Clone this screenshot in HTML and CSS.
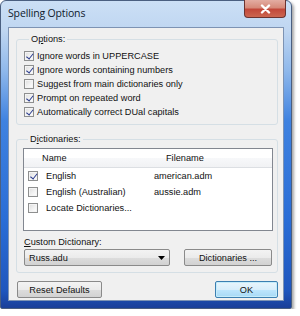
FILE: index.html
```html
<!DOCTYPE html>
<html lang="en">
<head>
<meta charset="UTF-8">
<title>Spelling Options</title>
<link rel="stylesheet" href="styles.css">
</head>
<body>

<div class="window">
    <div class="titlebar">
        <span class="title">Spelling Options</span>
        <span class="close-btn">
            <svg width="11" height="10" viewBox="0 0 11 10"><path d="M2 1.5 L9 8.5 M9 1.5 L2 8.5" stroke="#fff" stroke-width="2.4" stroke-linecap="round"/></svg>
        </span>
    </div>

    <div class="client">
        <fieldset class="group options">
            <legend>O<u>p</u>tions:</legend>
            <div class="check-row"><span class="check on"></span>Ignore words in UPPERCASE</div>
            <div class="check-row"><span class="check on"></span>Ignore words containing numbers</div>
            <div class="check-row"><span class="check"></span>Suggest from main dictionaries only</div>
            <div class="check-row"><span class="check on"></span>Prompt on repeated word</div>
            <div class="check-row"><span class="check on"></span>Automatically correct DUal capitals</div>
        </fieldset>

        <fieldset class="group dicts">
            <legend>D<u>i</u>ctionaries:</legend>
            <div class="listview">
                <div class="lv-header">
                    <span class="head-name">Name</span>
                    <span class="head-file">Filename</span>
                </div>
                <div class="lv-row"><span class="col-name"><span class="check on"></span>English</span><span class="col-file">american.adm</span></div>
                <div class="lv-row"><span class="col-name"><span class="check"></span>English (Australian)</span><span class="col-file">aussie.adm</span></div>
                <div class="lv-row"><span class="col-name"><span class="check"></span>Locate Dictionaries...</span><span class="col-file"></span></div>
            </div>
            <div class="custom-label"><u>C</u>ustom Dictionary:</div>
            <div class="custom-row">
                <div class="combo">
                    <span>Russ.adu</span>
                    <svg width="7" height="4" viewBox="0 0 7 4"><path d="M0 0 H7 L3.5 4 Z" fill="#000"/></svg>
                </div>
                <button class="btn dict-btn">Dictionaries ...</button>
            </div>
        </fieldset>

        <div class="footer">
            <button class="btn reset-btn">Reset Defaults</button>
            <button class="btn ok-btn">OK</button>
        </div>
    </div>
</div>

</body>
</html>
```

FILE: styles.css
```css
body {
    margin: 0;
    padding: 0;
    background-color: #fff;
    font-family: "Liberation Sans", Arial, sans-serif;
    font-size: 9.2px;
    color: #111;
}
.window {
    width: 292px;
    height: 309px;
    box-sizing: border-box;
    padding: 0 7px 7px 7px;
    border: 1px solid #4a5f80;
    border-radius: 6px 6px 2px 2px;
    background: linear-gradient(to bottom, #cbdff5 0, #bfd6f1 30px, #8fb8eb 70px, #3f82e0 120px, #2a6dd6 220px, #1f56bd 290px, #1a3f98 100%);
    box-shadow: 2px 2px 3px rgba(0,0,0,0.35);
    display: flex;
    flex-direction: column;
}
.titlebar {
    height: 26px;
    display: flex;
    justify-content: space-between;
    align-items: flex-start;
    flex-shrink: 0;
}
.title {
    font-family: "Open Sans", "Liberation Sans", sans-serif;
    font-size: 10.5px;
    letter-spacing: -0.15px;
    margin-top: 5px;
    color: #0f1a2c;
}
.close-btn {
    width: 40px;
    height: 17px;
    margin-top: -1px;
    margin-right: -2px;
    border: 1px solid #6b3330;
    border-top: none;
    border-radius: 0 0 4px 4px;
    background: linear-gradient(to bottom, #e3ada2 0, #d68a7a 45%, #c2483a 55%, #cc6650 100%);
    display: flex;
    justify-content: center;
    align-items: center;
}
.client {
    flex: 1;
    background-color: #f0f0f0;
    border: 1px solid #7d93b3;
    padding: 5px 5px 0 7px;
    display: flex;
    flex-direction: column;
}
.group {
    margin: 0;
    padding: 0 5px 5px 7px;
    border: 1px solid #d5dfe5;
    border-radius: 3px;
}
.group legend {
    padding: 0 2px;
    margin-left: 5px;
    line-height: 12px;
}
.options .check-row:first-of-type {
    margin-top: 4px;
}
.check-row {
    height: 14px;
    display: flex;
    align-items: center;
}
.check {
    width: 8px;
    height: 8px;
    border: 1px solid #8e8f8f;
    background: linear-gradient(135deg, #dcdcdc 0, #f4f4f4 60%, #fff 100%);
    box-shadow: inset 0 0 0 1px #f4f4f4;
    margin-right: 3px;
    flex-shrink: 0;
    position: relative;
}
.check.on::after {
    content: "";
    position: absolute;
    left: 2.5px;
    top: 0;
    width: 2.5px;
    height: 5.5px;
    border: solid #2c3d8f;
    border-width: 0 1.5px 1.5px 0;
    transform: rotate(38deg);
}
.dicts {
    margin-top: 8px;
    padding-right: 4px;
    padding-left: 6px;
    padding-bottom: 6px;
}
.listview {
    margin-top: 3px;
    height: 81px;
    border: 1px solid #828790;
    background-color: #fff;
}
.lv-header {
    height: 18px;
    display: flex;
    align-items: center;
    background: linear-gradient(to bottom, #fff 0, #fff 50%, #f7f8fa 51%, #f1f2f4 100%);
    border-bottom: 1px solid #dcdfe3;
}
.head-name {
    flex: 0 0 142px;
    box-sizing: border-box;
    padding-left: 18px;
}
.head-file {
    flex: 1;
}
.lv-row {
    height: 16px;
    display: flex;
    align-items: center;
}
.lv-row .col-name {
    flex: 0 0 130px;
    box-sizing: border-box;
    padding-left: 4px;
    display: flex;
    align-items: center;
}
.lv-row .check {
    margin-right: 8px;
}
.custom-label {
    margin-top: 5px;
    line-height: 12px;
    padding-left: 1px;
}
.custom-row {
    margin-top: 1px;
    display: flex;
    align-items: center;
    padding-left: 1px;
}
.combo {
    width: 146px;
    height: 17px;
    box-sizing: border-box;
    border: 1px solid #8a8a8a;
    border-radius: 2px;
    background: linear-gradient(to bottom, #f3f3f3 0, #ebebeb 50%, #dddddd 51%, #d2d2d2 100%);
    display: flex;
    justify-content: space-between;
    align-items: center;
    padding: 0 4px 0 4px;
}
.btn {
    font-family: "Liberation Sans", Arial, sans-serif;
    font-size: 9.2px;
    color: #111;
    height: 17px;
    padding: 0;
    border: 1px solid #8a8a8a;
    border-radius: 2px;
    background: linear-gradient(to bottom, #f3f3f3 0, #ebebeb 50%, #dddddd 51%, #d2d2d2 100%);
}
.dict-btn {
    width: 88px;
    margin-left: 14px;
}
.footer {
    margin-top: 8px;
    display: flex;
    justify-content: space-between;
    padding-left: 1px;
}
.reset-btn {
    width: 85px;
}
.ok-btn {
    width: 63px;
    border-color: #3c7fb1;
    background: linear-gradient(to bottom, #e9f5fc 0, #d8eefb 50%, #bee6fd 51%, #a7d9f5 100%);
    box-shadow: inset 0 0 0 1px #c5ecfa;
}
```
